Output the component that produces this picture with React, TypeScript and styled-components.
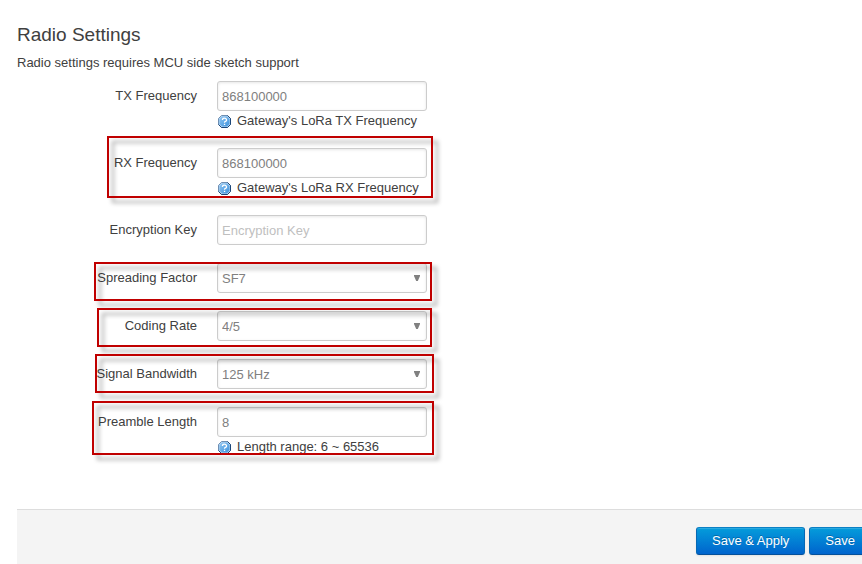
import React from "react";
import styled, { createGlobalStyle, css } from "styled-components";

const GlobalStyle = createGlobalStyle`
  *, *::before, *::after { box-sizing: border-box; }
  html, body { margin: 0; }
  body {
    background: #fff;
    color: #404040;
    font: 13px/18px "Liberation Sans", Arial, sans-serif;
    overflow-x: hidden;
  }
`;

const Page = styled.main`
  padding: 17px 0 0 17px;
  overflow: hidden;
`;

const Title = styled.h1`
  margin: 0;
  font-size: 19px;
  line-height: 36px;
  font-weight: 400;
`;

const Description = styled.p`
  margin: 1px 0 9px;
`;

const Form = styled.form`
  margin: 0;
`;

const Fields = styled.div`
  display: flex;
  flex-direction: column;
  gap: 18px;
  padding-bottom: 53px;
`;

const Row = styled.div`
  position: relative;
  display: grid;
  grid-template-columns: 180px 210px;
  column-gap: 20px;
  align-items: start;
`;

const Label = styled.label`
  padding-top: 6px;
  text-align: right;
  white-space: nowrap;
`;

const control = css`
  display: block;
  width: 100%;
  height: 30px;
  margin: 0;
  padding: 4px;
  border: 1px solid #ccc;
  border-radius: 3px;
  background: #fff;
  box-shadow: inset 0 1px 3px rgba(0, 0, 0, 0.1);
  color: #808080;
  font: inherit;
  outline: none;
`;

const TextInput = styled.input`
  ${control}
  &::placeholder {
    color: #bfbfbf;
    opacity: 1;
  }
`;

const SelectWrap = styled.div`
  position: relative;
`;

const Select = styled.select`
  ${control}
  appearance: none;
  padding: 6px 20px 4px 4px;
`;

const Arrow = styled.svg`
  position: absolute;
  right: 7px;
  top: 12px;
  pointer-events: none;
`;

const Help = styled.div`
  display: flex;
  align-items: center;
  gap: 6px;
  height: 19px;
  padding-left: 1px;
  white-space: nowrap;

  svg {
    margin-top: 1px;
  }
`;

const Highlight = styled.div<{ $top: number; $left: number; $right: number; $height: number }>`
  position: absolute;
  top: ${(p) => p.$top}px;
  left: ${(p) => p.$left}px;
  width: ${(p) => 410 + p.$right - p.$left}px;
  height: ${(p) => p.$height}px;
  border: 2px solid #c00000;
  filter: drop-shadow(5px 5px 2px rgba(0, 0, 0, 0.35));
  pointer-events: none;
`;

const Footer = styled.footer`
  display: flex;
  justify-content: flex-end;
  gap: 4px;
  padding: 17px 0 9px;
  border-top: 1px solid #ddd;
  background: #f4f4f4;
`;

const Button = styled.button`
  height: 28px;
  padding: 0 15px;
  border: 1px solid;
  border-color: #0b80c4 #0669b4 #04509a;
  border-radius: 3px;
  background: linear-gradient(#049cdb, #0064cd);
  box-shadow: inset 0 1px 0 rgba(255, 255, 255, 0.15), 0 1px 2px rgba(0, 0, 0, 0.08);
  color: #fff;
  font: inherit;
  text-shadow: 0 -1px 0 rgba(0, 0, 0, 0.25);
  white-space: nowrap;

  &:last-child {
    margin-right: -9px;
  }
`;

function HelpIcon() {
  return (
    <svg width="13" height="13" viewBox="0 0 13 13" aria-hidden="true">
      <defs>
        <linearGradient id="help-fill" x1="0" y1="0" x2="1" y2="1">
          <stop offset="0" stopColor="#8ec5f2" />
          <stop offset="1" stopColor="#3f92dc" />
        </linearGradient>
      </defs>
      <path d="M3.500 .5h6l3 3v6l-3 3h-6l-3-3v-6z" fill="#b5d5f0" stroke="#6f8fb3" />
      <path d="M9.500 .5l3 3v6l-3 3h-6l-3-3" fill="none" stroke="#1d4678" />
      <path d="M4 1.500h5L11.500 4v5L9 11.500H4L1.500 9V4z" fill="url(#help-fill)" />
      <path d="M4.500 5V4.200Q4.800 3.200 6.500 3.200T8.600 4.900Q8.600 5.900 7.500 6.300T6.500 7.800" fill="none" stroke="#fff" strokeWidth="1.300" />
      <path d="M5.900 8.800h1.300V10H5.900z" fill="#fff" />
    </svg>
  );
}

type Mark = { top: number; left: number; right: number; height: number };
type Field = {
  id: string;
  label: string;
  value: string;
  options?: string[];
  placeholder?: string;
  help?: string;
  mark?: Mark;
};

const fields: Field[] = [
  { id: "tx", label: "TX Frequency", value: "868100000", help: "Gateway's LoRa TX Frequency" },
  {
    id: "rx",
    label: "RX Frequency",
    value: "868100000",
    help: "Gateway's LoRa RX Frequency",
    mark: { top: -12, left: 90, right: 6, height: 62 },
  },
  { id: "key", label: "Encryption Key", value: "", placeholder: "Encryption Key" },
  {
    id: "sf",
    label: "Spreading Factor",
    value: "SF7",
    options: ["SF7", "SF8", "SF9", "SF10", "SF11", "SF12"],
    mark: { top: -1, left: 77, right: 5, height: 39 },
  },
  {
    id: "cr",
    label: "Coding Rate",
    value: "4/5",
    options: ["4/5", "4/6", "4/7", "4/8"],
    mark: { top: -3, left: 80, right: 5, height: 39 },
  },
  {
    id: "bw",
    label: "Signal Bandwidth",
    value: "125 kHz",
    options: ["125 kHz", "250 kHz", "500 kHz"],
    mark: { top: -5, left: 78, right: 7, height: 39 },
  },
  {
    id: "preamble",
    label: "Preamble Length",
    value: "8",
    help: "Length range: 6 ~ 65536",
    mark: { top: -6, left: 75, right: 7, height: 54 },
  },
];

function FieldRow({ field }: { field: Field }) {
  const { id, label, value, options, placeholder, help, mark } = field;
  return (
    <Row>
      <Label htmlFor={id}>{label}</Label>
      <div>
        {options ? (
          <SelectWrap>
            <Select id={id} defaultValue={value}>
              {options.map((o) => (
                <option key={o}>{o}</option>
              ))}
            </Select>
            <Arrow width="6" height="6" viewBox="0 0 6 6" aria-hidden="true">
              <path d="M0 0h6v1L3.800 6H2.200L0 1z" fill="#808080" />
            </Arrow>
          </SelectWrap>
        ) : (
          <TextInput id={id} type="text" defaultValue={value} placeholder={placeholder} />
        )}
        {help && (
          <Help>
            <HelpIcon />
            {help}
          </Help>
        )}
      </div>
      {mark && <Highlight $top={mark.top} $left={mark.left} $right={mark.right} $height={mark.height} />}
    </Row>
  );
}

export default function App() {
  return (
    <>
      <GlobalStyle />
      <Page>
        <Title>Radio Settings</Title>
        <Description>Radio settings requires MCU side sketch support</Description>
        <Form onSubmit={(e) => e.preventDefault()}>
          <Fields>
            {fields.map((f) => (
              <FieldRow key={f.id} field={f} />
            ))}
          </Fields>
          <Footer>
            <Button type="submit">Save &amp; Apply</Button>
            <Button type="submit">Save</Button>
          </Footer>
        </Form>
      </Page>
    </>
  );
}
